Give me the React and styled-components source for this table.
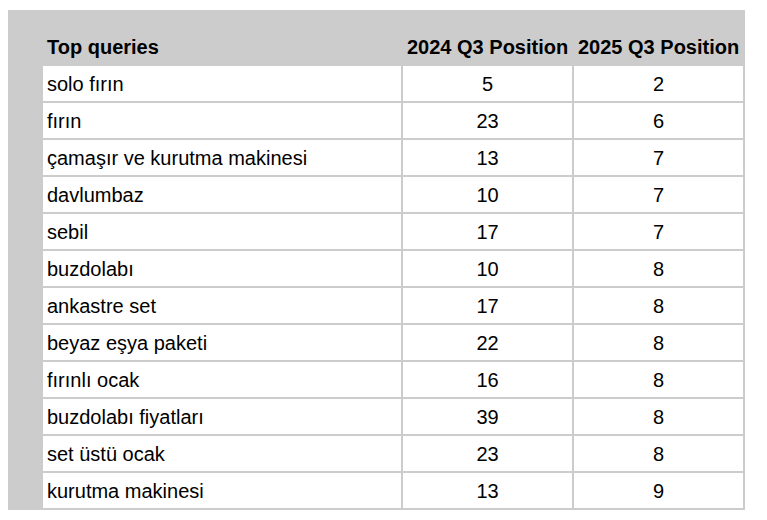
import React from "react";
import styled, { createGlobalStyle } from "styled-components";

const GlobalStyle = createGlobalStyle`
  html, body {
    margin: 0;
    padding: 0;
    background: #ffffff;
  }
  body {
    font-family: "Liberation Sans", Arial, sans-serif;
    color: #000000;
  }
`;

const Panel = styled.section`
  box-sizing: border-box;
  width: 737px;
  margin: 10px 0 0 8px;
  padding: 17px 0 0 33px;
  background: #cccccc;
`;

const Table = styled.table`
  width: 704px;
  table-layout: fixed;
  border-collapse: separate;
  border-spacing: 2px;
  font-size: 20px;
  font-family: "Liberation Sans", Arial, sans-serif;
`;

const HeadCell = styled.th`
  box-sizing: border-box;
  width: ${(p) => p.$w}px;
  height: 35px;
  padding: 2px 4px 0;
  font-weight: bold;
  text-align: ${(p) => (p.$center ? "center" : "left")};
  vertical-align: middle;
  white-space: nowrap;
  background: #cccccc;
`;

const Cell = styled.td`
  box-sizing: border-box;
  height: 35px;
  padding: 2px 4px 0;
  background: #ffffff;
  text-align: ${(p) => (p.$center ? "center" : "left")};
  vertical-align: middle;
  white-space: nowrap;
`;

const rows = [
  ["solo fırın", 5, 2],
  ["fırın", 23, 6],
  ["çamaşır ve kurutma makinesi", 13, 7],
  ["davlumbaz", 10, 7],
  ["sebil", 17, 7],
  ["buzdolabı", 10, 8],
  ["ankastre set", 17, 8],
  ["beyaz eşya paketi", 22, 8],
  ["fırınlı ocak", 16, 8],
  ["buzdolabı fiyatları", 39, 8],
  ["set üstü ocak", 23, 8],
  ["kurutma makinesi", 13, 9],
];

export default function App() {
  return (
    <>
      <GlobalStyle />
      <Panel>
        <Table>
          <thead>
            <tr>
              <HeadCell $w={358}>Top queries</HeadCell>
              <HeadCell $w={169} $center>2024 Q3 Position</HeadCell>
              <HeadCell $w={169} $center>2025 Q3 Position</HeadCell>
            </tr>
          </thead>
          <tbody>
            {rows.map(([q, a, b]) => (
              <tr key={q}>
                <Cell>{q}</Cell>
                <Cell $center>{a}</Cell>
                <Cell $center>{b}</Cell>
              </tr>
            ))}
          </tbody>
        </Table>
      </Panel>
    </>
  );
}
